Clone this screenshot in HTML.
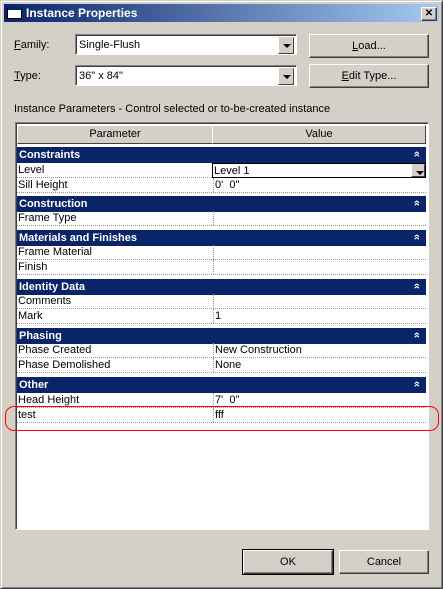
<!DOCTYPE html>
<html><head><style>
*{margin:0;padding:0;box-sizing:border-box}
body{width:443px;height:589px;background:#d4d0c8;font-family:Tahoma,"Liberation Sans",sans-serif;font-size:11px;color:#000;position:relative;overflow:hidden}
.a{position:absolute}
.win{left:0;top:0;width:443px;height:589px;border:1px solid;border-color:#d4d0c8 #404040 #404040 #d4d0c8;box-shadow:inset 1px 1px #fff,inset -1px -1px #808080}
.title{left:4px;top:4px;width:435px;height:18px;background:linear-gradient(90deg,#0a246a,#a6caf0);color:#fff;font-weight:bold;font-size:12px;line-height:18px;padding-left:22px}
.btn{border:1px solid;border-color:#fff #404040 #404040 #fff;box-shadow:inset -1px -1px #808080;text-align:center;background:#d4d0c8}
.combo{background:#fff;border:1px solid;border-color:#808080 #fff #fff #808080;box-shadow:inset 1px 1px #404040;padding:4px 0 0 3px}
.arr{position:absolute;right:2px;top:2px;width:16px;height:17px;background:#d4d0c8;border:1px solid;border-color:#d4d0c8 #404040 #404040 #fff}
.arr:after{content:"";position:absolute;left:4px;top:6px;border:4px solid transparent;border-top:4px solid #000;border-bottom:0}
.grid{left:15px;top:122px;width:414px;height:408px;background:#fff;border:1px solid;border-color:#808080 #fff #fff #808080;box-shadow:inset 1px 1px #404040}
.hd{top:125px;height:19px;background:#d4d0c8;border:1px solid;border-color:#fff #404040 #404040 #fff;text-align:center;line-height:17px}
.sec{left:17px;width:409px;height:16px;background:#0a246a;color:#fff;font-weight:bold;font-size:11px;line-height:16px;padding-left:2px}
.sec:after{content:"»";position:absolute;right:6px;top:-1px;transform:rotate(-90deg);font-size:11px}
.row{left:17px;width:409px;height:15px;border-bottom:1px dotted #999;line-height:15px}
.row span{position:absolute;left:1px}
.row b{font-weight:normal;position:absolute;left:196px;top:0;height:14px;border-left:1px dotted #999;padding-left:1px}
</style></head><body>
<div class="a win"></div>
<div class="a title"><div class="a" style="left:3px;top:3px;width:15px;height:12px;background:#fff;border:1px solid #000;border-top:3px solid #0a246a"></div>Instance Properties</div>
<div class="a" style="left:421px;top:7px;width:16px;height:14px" ><div class="btn" style="width:16px;height:14px;line-height:12px;font-weight:bold;font-size:10px">✕</div></div>
<div class="a" style="left:14px;top:39px"><u>F</u>amily:</div>
<div class="a" style="left:14px;top:70px"><u>T</u>ype:</div>
<div class="a combo" style="left:75px;top:34px;width:222px;height:21px">Single-Flush<div class="arr"></div></div>
<div class="a combo" style="left:75px;top:65px;width:222px;height:21px">36" x 84"<div class="arr"></div></div>
<div class="a btn" style="left:309px;top:34px;width:120px;height:24px;line-height:22px"><u>L</u>oad...</div>
<div class="a btn" style="left:309px;top:64px;width:120px;height:24px;line-height:22px"><u>E</u>dit Type...</div>
<div class="a" style="left:14px;top:103px">Instance Parameters - Control selected or to-be-created instance</div>
<div class="a grid"></div>
<div class="a hd" style="left:17px;width:196px">Parameter</div>
<div class="a hd" style="left:212px;width:214px">Value</div>

<div class="a sec" style="top:147px">Constraints</div>
<div class="a row" style="top:163px"><span>Level</span></div>
<div class="a" style="left:212px;top:163px;width:214px;height:15px;border:1px solid #000;background:#fff;line-height:14px;padding-left:1px">Level 1<div class="arr" style="right:0;top:0;height:13px;width:14px"></div></div>
<div class="a row" style="top:178px"><span>Sill Height</span><b>0'&nbsp; 0"</b></div>
<div class="a sec" style="top:196px">Construction</div>
<div class="a row" style="top:211px"><span>Frame Type</span><b></b></div>
<div class="a sec" style="top:230px">Materials and Finishes</div>
<div class="a row" style="top:245px"><span>Frame Material</span><b></b></div>
<div class="a row" style="top:260px"><span>Finish</span><b></b></div>
<div class="a sec" style="top:279px">Identity Data</div>
<div class="a row" style="top:294px"><span>Comments</span><b></b></div>
<div class="a row" style="top:309px"><span>Mark</span><b>1</b></div>
<div class="a sec" style="top:328px">Phasing</div>
<div class="a row" style="top:343px"><span>Phase Created</span><b>New Construction</b></div>
<div class="a row" style="top:358px"><span>Phase Demolished</span><b>None</b></div>
<div class="a sec" style="top:377px">Other</div>
<div class="a row" style="top:393px"><span>Head Height</span><b>7'&nbsp; 0"</b></div>
<div class="a row" style="top:408px"><span>test</span><b>fff</b></div>
<div class="a" style="left:5px;top:406px;width:434px;height:25px;border:1px solid #f00;border-radius:9px"></div>

<div class="a btn" style="left:243px;top:550px;width:90px;height:24px;line-height:22px;outline:1px solid #000">OK</div>
<div class="a btn" style="left:339px;top:550px;width:90px;height:24px;line-height:22px">Cancel</div>
</body></html>
